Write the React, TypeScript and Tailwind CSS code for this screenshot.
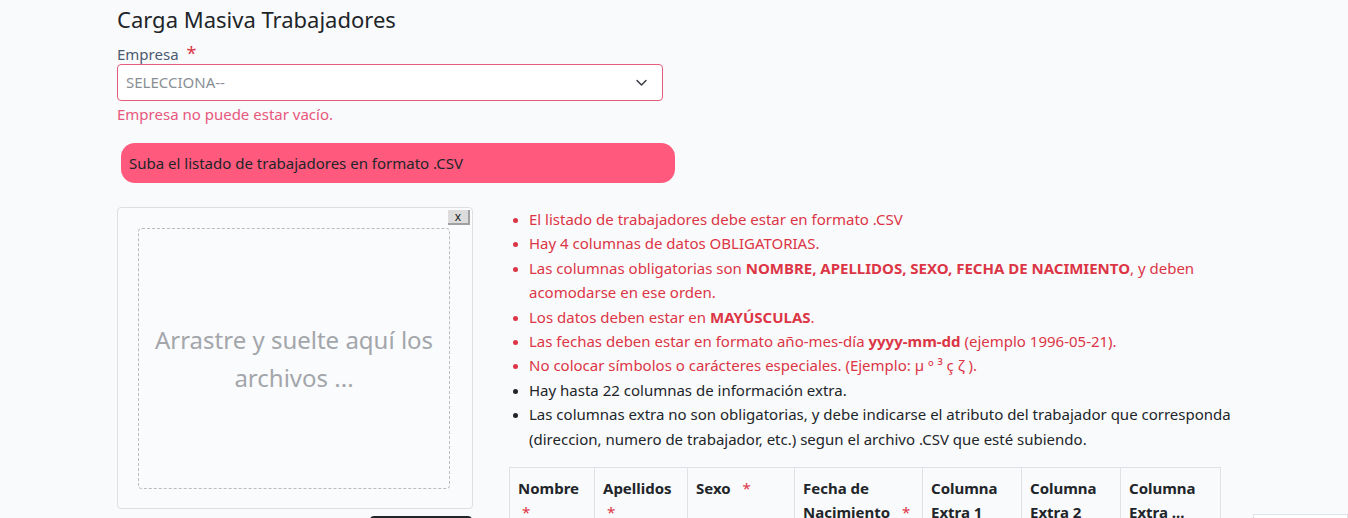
const Req = ({ className = "" }: { className?: string }) => (
  <span className={`text-[#dc3545] font-normal ${className}`}>*</span>
);

const rules: { red: boolean; content: React.ReactNode }[] = [
  { red: true, content: <>El listado de trabajadores debe estar en formato .CSV</> },
  { red: true, content: <>Hay 4 columnas de datos OBLIGATORIAS.</> },
  {
    red: true,
    content: (
      <>
        Las columnas obligatorias son <b>NOMBRE, APELLIDOS, SEXO, FECHA DE NACIMIENTO</b>, y deben acomodarse en ese orden.
      </>
    ),
  },
  { red: true, content: <>Los datos deben estar en <b>MAYÚSCULAS</b>.</> },
  {
    red: true,
    content: (
      <>
        Las fechas deben estar en formato año-mes-día <b>yyyy-mm-dd</b> (ejemplo 1996-05-21).
      </>
    ),
  },
  { red: true, content: <>No colocar símbolos o carácteres especiales. (Ejemplo: µ º ³ ç ζ ).</> },
  { red: false, content: <>Hay hasta 22 columnas de información extra.</> },
  {
    red: false,
    content: (
      <>
        Las columnas extra no son obligatorias, y debe indicarse el atributo del trabajador que corresponda (direccion, numero de trabajador, etc.) segun el archivo .CSV que esté subiendo.
      </>
    ),
  },
];

const columns: { label: React.ReactNode; w: string }[] = [
  { label: <>Nombre <Req className="ml-1" /></>, w: "w-[85px]" },
  { label: <>Apellidos <Req className="ml-1" /></>, w: "w-[93px]" },
  { label: <>Sexo <Req className="ml-2" /></>, w: "w-[107px]" },
  { label: <>Fecha de Nacimiento <Req className="ml-2" /></>, w: "w-[128px]" },
  { label: <>Columna Extra 1</>, w: "w-[99px]" },
  { label: <>Columna Extra 2</>, w: "w-[99px]" },
  { label: <>Columna Extra ...</>, w: "w-[100px]" },
];

export default function App() {
  return (
    <div className="relative h-[518px] bg-[#f9fafc] text-[#212529] font-['Noto_Sans',sans-serif] overflow-hidden">
      <div className="w-[1240px] pl-[117px] pt-[5px]">
        <h1 className="text-[22px] leading-[28px] text-[#212529]">Carga Masiva Trabajadores</h1>

        <div className="mt-[11px] w-[546px]">
          <label className="block text-[15px] leading-[18px] text-[#4a5a70]">
            Empresa <span className="ml-1 text-[#dc3545] text-[18px]">*</span>
          </label>
          <div className="mt-[1px] h-[37px] border border-[#e35d7c] rounded-[4px] bg-white flex items-center justify-between px-[8px]">
            <span className="text-[15px] text-[#8a8f96]">SELECCIONA--</span>
            <svg width="13" height="13" viewBox="0 0 16 16" className="mr-[6px]">
              <path d="M2.5 5.5 8 11l5.5-5.5" fill="none" stroke="#343a40" strokeWidth="1.8" strokeLinecap="round" strokeLinejoin="round" />
            </svg>
          </div>
          <p className="mt-[3px] text-[15px] leading-[20px] text-[#e8577c]">Empresa no puede estar vacío.</p>
        </div>

        <div className="mt-[19px] ml-[4px] w-[554px] h-[40px] rounded-[14px] bg-[#ff5a7d] flex items-center px-[8px] text-[15px] text-[#212529]">
          Suba el listado de trabajadores en formato .CSV
        </div>

        <div className="mt-[24px] flex gap-[37px]">
          <div className="shrink-0">
            <div className="relative w-[356px] h-[302px] border border-[#dcdfe4] rounded-[4px] bg-[#fafbfd] pl-[20px] pr-[22px] pt-[20px] pb-[19px]">
              <button className="absolute right-[2px] top-[2px] w-[22px] h-[15px] bg-[#dcdcdc] border-r-2 border-b-2 border-[#a0a0a0] text-[12px] leading-[12px] text-[#222] flex items-center justify-center">
                x
              </button>
              <div className="h-full border border-dashed border-[#b9bcc0] rounded-[4px] flex items-center justify-center text-center px-3">
                <span className="text-[24px] leading-[38px] text-[#a3a6aa]">Arrastre y suelte aquí los archivos ...</span>
              </div>
            </div>
            <div className="mt-[7px] ml-[253px] w-[102px] h-[10px] bg-[#212529] rounded-t-[4px]" />
          </div>

          <div className="w-[730px]">
            <ul className="list-disc pl-[19px] text-[15px] leading-[24.4px] marker:text-[13px]">
              {rules.map((r, i) => (
                <li key={i} className={r.red ? "text-[#dc3545] marker:text-[#dc3545]" : "text-[#212529]"}>
                  {r.content}
                </li>
              ))}
            </ul>

            <table className="mt-[16px] -ml-[1px] border-collapse text-[15px] leading-[24px]">
              <thead>
                <tr>
                  {columns.map((c, i) => (
                    <th key={i} className={`${c.w} border border-[#dee2e6] text-left align-top font-bold px-[8px] pt-[8px] pb-[8px]`}>
                      {c.label}
                    </th>
                  ))}
                </tr>
              </thead>
            </table>
          </div>
        </div>
      </div>
      <div className="absolute left-[1253px] top-[514px] w-[95px] h-[10px] border border-[#dee2e6] bg-white" />
    </div>
  );
}
